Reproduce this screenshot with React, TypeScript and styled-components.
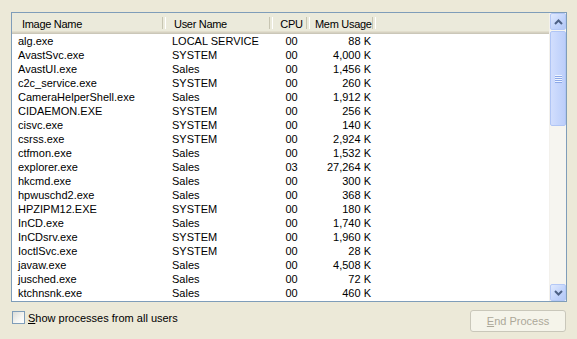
import React from 'react';
import styled, { createGlobalStyle } from 'styled-components';

const GlobalStyle = createGlobalStyle`
  html, body {
    margin: 0;
    padding: 0;
    background: #ece9d8;
  }
  * {
    box-sizing: border-box;
  }
`;

const Window = styled.div`
  width: 577px;
  height: 339px;
  background: #ece9d8;
  padding: 12px 11px 0 11px;
  font-family: 'Liberation Sans', Arial, sans-serif;
  font-size: 11px;
  color: #000;
  display: flex;
  flex-direction: column;
`;

const ListBox = styled.div`
  width: 556px;
  height: 290px;
  border: 1px solid #7f9db9;
  background: #fff;
  display: flex;
  overflow: hidden;
`;

const ListArea = styled.div`
  flex: 1;
  display: flex;
  flex-direction: column;
  min-width: 0;
`;

const HeaderRow = styled.div`
  height: 21px;
  display: flex;
  background: #ebeadb;
  box-shadow: inset 0 -1px 0 #cbc7b8, inset 0 -2px 0 #d6d2c2, inset 0 -3px 0 #e2decd;
`;

const HeaderCell = styled.div<{ w: number; align?: string; pad?: number }>`
  width: ${p => p.w}px;
  flex: none;
  position: relative;
  display: flex;
  align-items: center;
  justify-content: ${p => p.align || 'flex-start'};
  padding: 1px 0 0 ${p => p.pad ?? 8}px;
  white-space: nowrap;
  letter-spacing: -0.3px;

  &::after {
    content: '';
    position: absolute;
    right: 0;
    top: 4px;
    bottom: 5px;
    width: 2px;
    border-left: 1px solid #c7c5b2;
    border-right: 1px solid #fff;
  }
`;

const HeaderFill = styled.div`
  flex: 1;
`;

const Row = styled.div`
  height: 14px;
  display: flex;
  align-items: center;
  white-space: nowrap;
`;

const Cell = styled.div<{ w: number; align?: string; pad?: number }>`
  width: ${p => p.w}px;
  flex: none;
  text-align: ${p => p.align || 'left'};
  padding-left: ${p => p.pad ?? 6}px;
  padding-right: ${p => (p.align === 'right' ? 5 : 0)}px;
  overflow: hidden;
  line-height: 14px;
`;

const ScrollBar = styled.div`
  width: 17px;
  flex: none;
  display: flex;
  flex-direction: column;
  background: #f6f5f0;
  border-left: 1px solid #f3f1ec;
`;

const ScrollButton = styled.div`
  height: 17px;
  flex: none;
  border: 1px solid #b4c8f6;
  border-radius: 2px;
  background: linear-gradient(to bottom right, #e1eafe, #c1d3fb 60%, #b4c8f6);
  display: flex;
  align-items: center;
  justify-content: center;
`;

const Track = styled.div`
  flex: 1;
  display: flex;
  flex-direction: column;
  padding-top: 1px;
`;

const Thumb = styled.div`
  height: 95px;
  border: 1px solid #b0c5f5;
  border-radius: 2px;
  background: linear-gradient(to right, #d2defd, #c6d6fc 50%, #bccefa);
  display: flex;
  flex-direction: column;
  align-items: center;
  justify-content: center;
  gap: 1px;
`;

const Grip = styled.div`
  width: 7px;
  height: 1px;
  background: #eef4fe;
  box-shadow: 0 1px 0 #8ca8e8;
`;

const Footer = styled.div`
  display: flex;
  justify-content: space-between;
  align-items: flex-start;
  margin-top: 8px;
  padding-left: 1px;
`;

const CheckRow = styled.label`
  display: flex;
  align-items: center;
  gap: 3px;
  margin-top: 1px;
`;

const CheckBox = styled.span`
  width: 13px;
  height: 13px;
  border: 1px solid #7f9db9;
  background: linear-gradient(to bottom right, #dcdcd7, #f6f6f3 60%, #fff);
`;

const Button = styled.div`
  width: 96px;
  height: 22px;
  border: 1px solid #c9c7ba;
  border-radius: 3px;
  background: #f5f4ea;
  color: #aca899;
  display: flex;
  align-items: center;
  justify-content: center;
`;

const U = styled.span`
  text-decoration: underline;
`;

const columns = [
  { w: 154, label: 'Image Name', pad: 10 },
  { w: 107, label: 'User Name', pad: 8 },
  { w: 37, label: 'CPU', pad: 0, align: 'center' },
  { w: 66, label: 'Mem Usage', pad: 5 },
];

const rows: [string, string, string, string][] = [
  ['alg.exe', 'LOCAL SERVICE', '00', '88 K'],
  ['AvastSvc.exe', 'SYSTEM', '00', '4,000 K'],
  ['AvastUI.exe', 'Sales', '00', '1,456 K'],
  ['c2c_service.exe', 'SYSTEM', '00', '260 K'],
  ['CameraHelperShell.exe', 'Sales', '00', '1,912 K'],
  ['CIDAEMON.EXE', 'SYSTEM', '00', '256 K'],
  ['cisvc.exe', 'SYSTEM', '00', '140 K'],
  ['csrss.exe', 'SYSTEM', '00', '2,924 K'],
  ['ctfmon.exe', 'Sales', '00', '1,532 K'],
  ['explorer.exe', 'Sales', '03', '27,264 K'],
  ['hkcmd.exe', 'Sales', '00', '300 K'],
  ['hpwuschd2.exe', 'Sales', '00', '368 K'],
  ['HPZIPM12.EXE', 'SYSTEM', '00', '180 K'],
  ['InCD.exe', 'Sales', '00', '1,740 K'],
  ['InCDsrv.exe', 'SYSTEM', '00', '1,960 K'],
  ['IoctlSvc.exe', 'SYSTEM', '00', '28 K'],
  ['javaw.exe', 'Sales', '00', '4,508 K'],
  ['jusched.exe', 'Sales', '00', '72 K'],
  ['ktchnsnk.exe', 'Sales', '00', '460 K'],
];

const Arrow = ({ up }: { up?: boolean }) => (
  <svg width="9" height="6" viewBox="0 0 9 6">
    <path
      d={up ? 'M1 5 L4.5 1.5 L8 5' : 'M1 1 L4.5 4.5 L8 1'}
      fill="none"
      stroke="#4d6185"
      strokeWidth="2"
    />
  </svg>
);

export default function App() {
  return (
    <Window>
      <GlobalStyle />
      <ListBox>
        <ListArea>
          <HeaderRow>
            {columns.map(c => (
              <HeaderCell key={c.label} w={c.w} pad={c.pad} align={c.align}>
                {c.label}
              </HeaderCell>
            ))}
            <HeaderFill />
          </HeaderRow>
          {rows.map(r => (
            <Row key={r[0]}>
              <Cell w={columns[0].w}>{r[0]}</Cell>
              <Cell w={columns[1].w}>{r[1]}</Cell>
              <Cell w={columns[2].w} align="center" pad={0}>{r[2]}</Cell>
              <Cell w={columns[3].w} align="right" pad={0}>{r[3]}</Cell>
            </Row>
          ))}
        </ListArea>
        <ScrollBar>
          <ScrollButton><Arrow up /></ScrollButton>
          <Track>
            <Thumb>
              <Grip />
              <Grip />
              <Grip />
              <Grip />
            </Thumb>
          </Track>
          <ScrollButton><Arrow /></ScrollButton>
        </ScrollBar>
      </ListBox>
      <Footer>
        <CheckRow>
          <CheckBox />
          <span><U>S</U>how processes from all users</span>
        </CheckRow>
        <Button><span><U>E</U>nd Process</span></Button>
      </Footer>
    </Window>
  );
}
